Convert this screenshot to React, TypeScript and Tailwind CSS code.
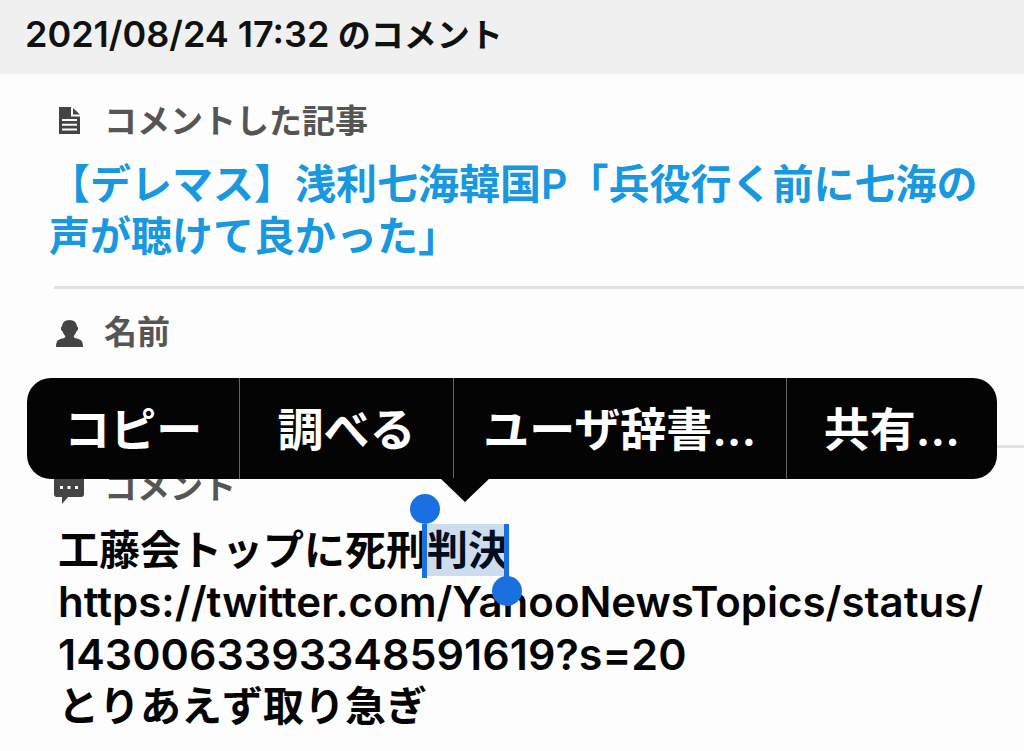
import React from 'react';

const menuItems = [
  { label: 'コピー', width: 'flex-[213]' },
  { label: '調べる', width: 'flex-[213]' },
  { label: 'ユーザ辞書...', width: 'flex-[333]' },
  { label: '共有...', width: 'flex-[211]' },
];

const ArticleIcon = () => (
  <svg viewBox="0 0 30 30" className="w-[30px] h-[30px]" fill="#444" aria-hidden="true">
    <path fillRule="evenodd" d="M5 0h12v9.500h9V27H5zM8 12v2h15v-2zM8 16.800v2h15v-2zM8 21.500v2h15v-2z" />
    <path d="M19 1l7 6.500h-7z" />
  </svg>
);

const PersonIcon = () => (
  <svg viewBox="0 0 30 30" className="w-[30px] h-[30px]" fill="#444" aria-hidden="true">
    <path d="M15.500 2c4.500 0 7.300 2.800 7.500 6.500 1.600.4 1.300 4-.5 4.800-.6 2-1.600 3.400-2.800 4.600.1 1.500.8 2 3.300 2.700 4 1 6 2.500 6 8.400h-27c0-5.900 2-7.400 6-8.400 2.500-.7 3.200-1.200 3.300-2.700-1.200-1.200-2.200-2.600-2.800-4.600-1.800-.8-2.100-4.400-.5-4.800.2-3.700 3-6.500 7.500-6.500z" />
  </svg>
);

const BubbleIcon = () => (
  <svg viewBox="0 0 30 30" className="w-[30px] h-[30px] overflow-visible" fill="#444" aria-hidden="true">
    <path d="M3 0h24a3 3 0 0 1 3 3v18a3 3 0 0 1-3 3H14l-6 7v-7H3a3 3 0 0 1-3-3V3a3 3 0 0 1 3-3z" />
    <path fill="#fff" d="M6 13h3v3H6zM13.500 13h3v3h-3zM21 13h3v3h-3z" />
  </svg>
);

const FieldLabel: React.FC<{ icon: React.ReactNode; children: React.ReactNode }> = ({ icon, children }) => (
  <h2 className="flex items-center gap-5 pl-[54px] h-12 text-[33px] font-bold text-[#555]">
    {icon}
    <span>{children}</span>
  </h2>
);

const Divider = () => <hr className="ml-[54px] border-0 h-[3px] bg-[#e2e2e2]" />;

const EditMenu = () => (
  <div role="menu" className="absolute top-[378px] left-[27px] right-[27px]">
    <div className="flex h-[101px] rounded-[24px] bg-[#040404] divide-x divide-[#666] overflow-hidden">
      {menuItems.map(item => (
        <button
          key={item.label}
          role="menuitem"
          className={`${item.width} min-w-0 pt-0.5 whitespace-nowrap text-center text-[46px] font-semibold text-white`}
        >
          {item.label}
        </button>
      ))}
    </div>
    <svg viewBox="0 0 50 24" className="absolute left-[413px] top-[100px] w-[50px] h-6" fill="#040404" aria-hidden="true">
      <path d="M0 0h50L25 24z" />
    </svg>
  </div>
);

const Selection: React.FC<{ children: React.ReactNode }> = ({ children }) => (
  <span className="relative inline-block h-[52px] bg-[#cddded] text-[#020d1e] align-top">
    {children}
    <span className="absolute left-[-5px] top-0 h-[54px] w-[5px] bg-[#1a70e0]" />
    <span className="absolute left-[-17px] top-[-30px] size-[30px] rounded-full bg-[#1a70e0]" />
    <span className="absolute right-0 top-0 h-[54px] w-[5px] bg-[#1a70e0]" />
    <span className="absolute right-[-13px] top-[52px] size-[30px] rounded-full bg-[#1a70e0]" />
  </span>
);

const App: React.FC = () => {
  return (
    <div className="relative min-h-screen bg-[#fdfdfd] overflow-hidden font-['Inter','Noto_Sans_CJK_JP',sans-serif]" lang="ja">
      <header className="flex items-center h-[74px] bg-[#f0f0f0] px-[25px] pb-1.5">
        <h1 className="text-[33px] font-semibold text-[#111]">
          <span className="text-[36px]">2021/08/24 17:32</span> のコメント
        </h1>
      </header>

      <main>
        <section className="pt-6">
          <FieldLabel icon={<ArticleIcon />}>コメントした記事</FieldLabel>
          <a
            href="#article"
            className="block mt-3 mb-6 pl-[49px] pr-[42px] text-[41px] leading-[52px] font-semibold text-[#1899df]"
          >
            【デレマス】浅利七海韓国P「兵役行く前に七海の声が聴けて良かった」
          </a>
          <Divider />
        </section>

        {/* Name was left blank */}
        <section className="pt-5">
          <FieldLabel icon={<PersonIcon />}>名前</FieldLabel>
          <p className="h-[52px] mt-3 mb-6" />
          <Divider />
        </section>

        <section className="pt-4">
          <FieldLabel icon={<BubbleIcon />}>コメント</FieldLabel>
          <div className="mt-3 pl-[58px] text-[41px] leading-[52px] font-semibold text-[#050505]">
            <p>工藤会トップに死刑<Selection>判決</Selection></p>
            <p className="text-[42px]">https://twitter.com/YahooNewsTopics/status/</p>
            <p className="text-[43px]">1430063393348591619?s=20</p>
            <p>とりあえず取り急ぎ</p>
          </div>
        </section>
      </main>

      <EditMenu />
    </div>
  );
};

export default App;
